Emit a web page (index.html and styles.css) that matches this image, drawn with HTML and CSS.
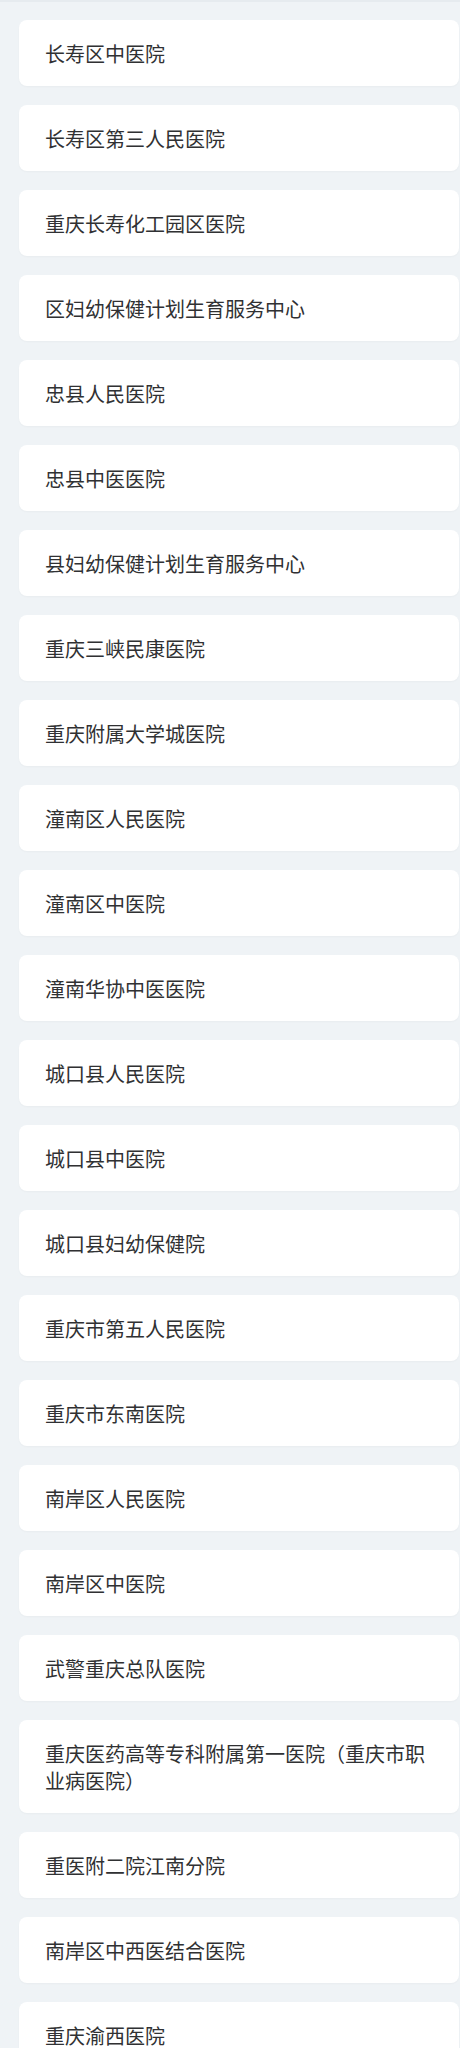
FILE: index.html
```html
<!DOCTYPE html>
<html lang="zh-CN">
<head>
<meta charset="utf-8">
<link rel="stylesheet" href="styles.css">
</head>
<body>
<div class="topline"></div>
<ul class="list">
<li class="card">长寿区中医院</li>
<li class="card">长寿区第三人民医院</li>
<li class="card">重庆长寿化工园区医院</li>
<li class="card">区妇幼保健计划生育服务中心</li>
<li class="card">忠县人民医院</li>
<li class="card">忠县中医医院</li>
<li class="card">县妇幼保健计划生育服务中心</li>
<li class="card">重庆三峡民康医院</li>
<li class="card">重庆附属大学城医院</li>
<li class="card">潼南区人民医院</li>
<li class="card">潼南区中医院</li>
<li class="card">潼南华协中医医院</li>
<li class="card">城口县人民医院</li>
<li class="card">城口县中医院</li>
<li class="card">城口县妇幼保健院</li>
<li class="card">重庆市第五人民医院</li>
<li class="card">重庆市东南医院</li>
<li class="card">南岸区人民医院</li>
<li class="card">南岸区中医院</li>
<li class="card">武警重庆总队医院</li>
<li class="card">重庆医药高等专科附属第一医院（重庆市职业病医院）</li>
<li class="card">重医附二院江南分院</li>
<li class="card">南岸区中西医结合医院</li>
<li class="card">重庆渝西医院</li>
</ul>
</body>
</html>
```
FILE: styles.css
```css
html, body {
  margin: 0;
  padding: 0;
  background: #eff3f6;
}
body {
  font-family: "Noto Sans CJK SC", "Noto Sans", sans-serif;
  color: #303133;
}
.topline {
  height: 2px;
  background: #e6ebef;
}
.list {
  list-style: none;
  margin: 0;
  padding: 18px 1px 40px 19px;
  display: flex;
  flex-direction: column;
  gap: 19px;
}
.card {
  background: #ffffff;
  border-radius: 8px;
  padding: 19.5px 16px 19.5px 26px;
  font-size: 20px;
  line-height: 27px;
  box-shadow: 0 1px 2px rgba(0, 0, 0, 0.03);
}
```
